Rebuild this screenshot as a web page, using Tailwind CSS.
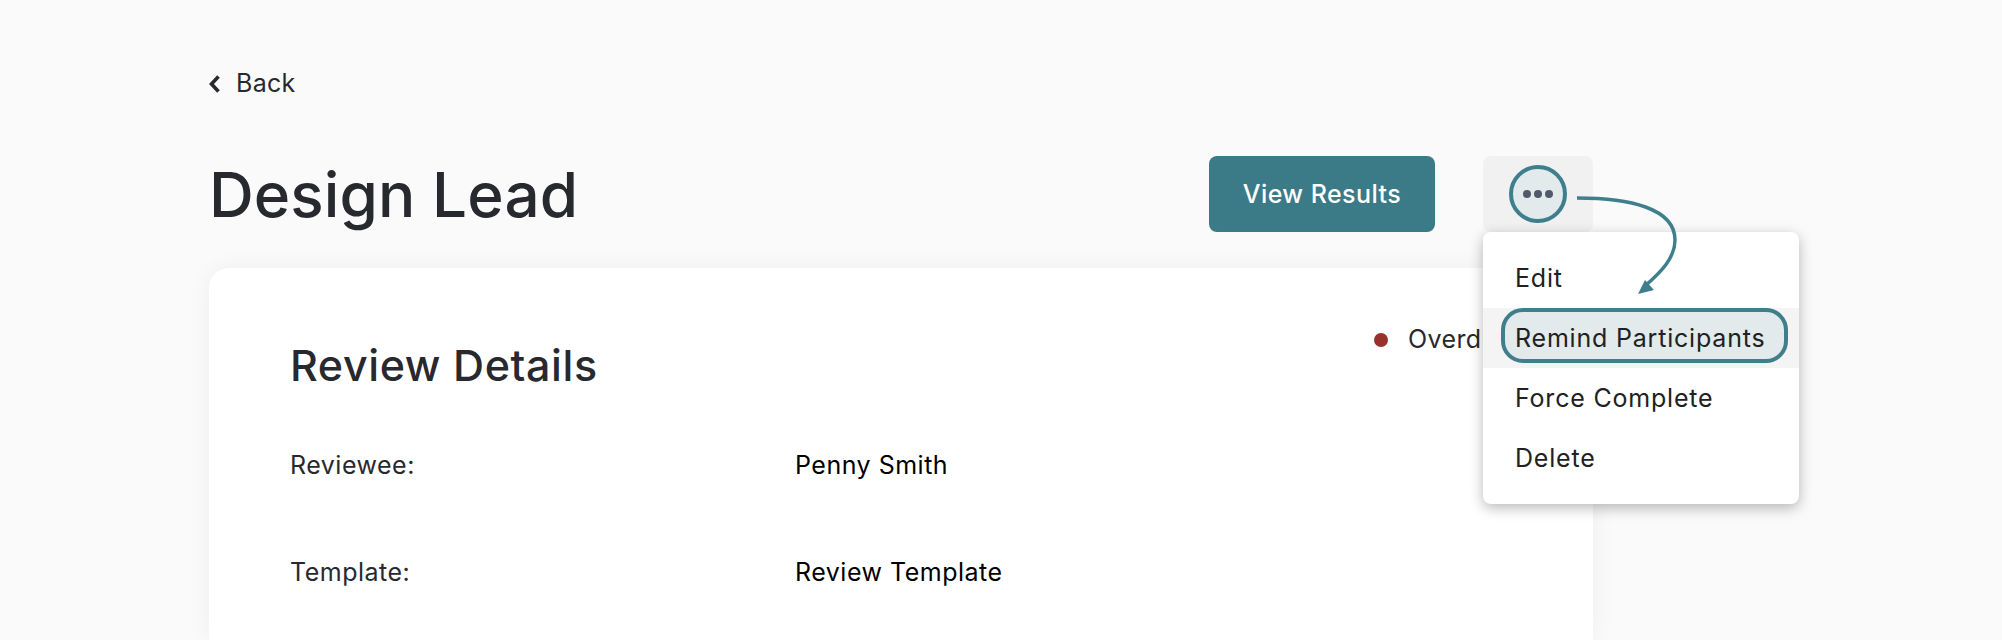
<!DOCTYPE html>
<html lang="en">

<head>
    <meta charset="UTF-8">
    <title>Design Lead</title>
    <script src="https://cdn.jsdelivr.net/npm/@tailwindcss/browser@4"></script>
</head>

<body class="bg-[#fafafa] h-[640px] overflow-hidden font-['Inter',sans-serif] text-[#28292f]">
    <div class="relative w-[1384px] ml-[209px] pt-[66px]">
        <!-- Back link -->
        <a class="flex items-center gap-[16px] h-[36px] text-[25px] tracking-[0.3px]">
            <svg class="w-[11px] h-[18px] -mt-[1px]" viewBox="0 0 11 18" fill="none" stroke="#28292f" stroke-width="3.6">
                <path d="M9.5 1.5L2.5 9l7 7.5" />
            </svg>
            <span>Back</span>
        </a>

        <!-- Title row -->
        <div class="flex items-center mt-[54px] h-[76px]">
            <h1 class="text-[62px] font-[550] tracking-[0.1px]">Design Lead</h1>
            <button class="ml-auto w-[226px] h-[76px] pt-[2px] rounded-lg bg-[#3b7a87] text-white text-[25px] tracking-[0.45px] font-medium">View Results</button>
            <div class="ml-[48px] w-[110px] h-[76px] rounded-lg bg-[#f1f1f1] flex items-center justify-center">
                <div class="w-[58px] h-[58px] rounded-full border-[4px] border-[#3f7f8c] bg-[#e2eaec] flex items-center justify-center gap-[3px]">
                    <span class="w-[8px] h-[8px] rounded-full bg-[#4f5b6b]"></span>
                    <span class="w-[8px] h-[8px] rounded-full bg-[#4f5b6b]"></span>
                    <span class="w-[8px] h-[8px] rounded-full bg-[#4f5b6b]"></span>
                </div>
            </div>
        </div>

        <!-- Card -->
        <div class="mt-[36px] h-[372px] rounded-t-[20px] bg-white shadow-[0_0_24px_rgba(0,0,0,0.05)] pl-[81px] pt-[60px]">
            <div class="flex items-start">
                <h2 class="w-[1084px] mt-[12px] text-[43px] leading-[50px] tracking-[0.6px] font-medium">Review Details</h2>
                <div class="flex items-center gap-[20px] h-[24px] text-[25px] tracking-[0.4px] whitespace-nowrap">
                    <span class="w-[14px] h-[14px] rounded-full bg-[#97312a]"></span>
                    <span>Overdue</span>
                </div>
            </div>
            <div class="grid grid-cols-[505px_1fr] gap-y-[71px] mt-[57px] text-[25px] leading-[36px] tracking-[0.5px]">
                <div>Reviewee:</div>
                <div class="text-black">Penny Smith</div>
                <div>Template:</div>
                <div class="text-black">Review Template</div>
            </div>
        </div>

        <!-- Dropdown -->
        <div class="absolute left-[1274px] top-[232px] w-[316px] h-[272px] rounded-lg bg-white shadow-[0_4px_14px_rgba(0,0,0,0.28)] pt-[16px] text-[25px] tracking-[0.8px] text-[#212121]">
            <div class="h-[60px] flex items-center pl-[32px] pt-[2px]">Edit</div>
            <div class="relative h-[60px] flex items-center pl-[32px] pt-[2px] bg-[#f4f4f4]">
                <div class="absolute left-[18px] top-0 w-[287px] h-[55px] rounded-[22px] border-[4px] border-[#3f7f8c] bg-[#e2eaec]"></div>
                <span class="relative">Remind Participants</span>
            </div>
            <div class="h-[60px] flex items-center pl-[32px] pt-[2px]">Force Complete</div>
            <div class="h-[60px] flex items-center pl-[32px] pt-[2px]">Delete</div>
        </div>

        <!-- Annotation arrow -->
        <svg class="absolute left-[1360px] top-[190px] w-[110px] h-[110px]" viewBox="0 0 110 110" fill="none">
            <path d="M8 8C60 8 106 18 106 50C106 68 92 82 76 96" stroke="#3f7f8c" stroke-width="3.5" />
            <path d="M69 104L76 90L85 100Z" fill="#3f7f8c" />
        </svg>
    </div>
</body>

</html>
